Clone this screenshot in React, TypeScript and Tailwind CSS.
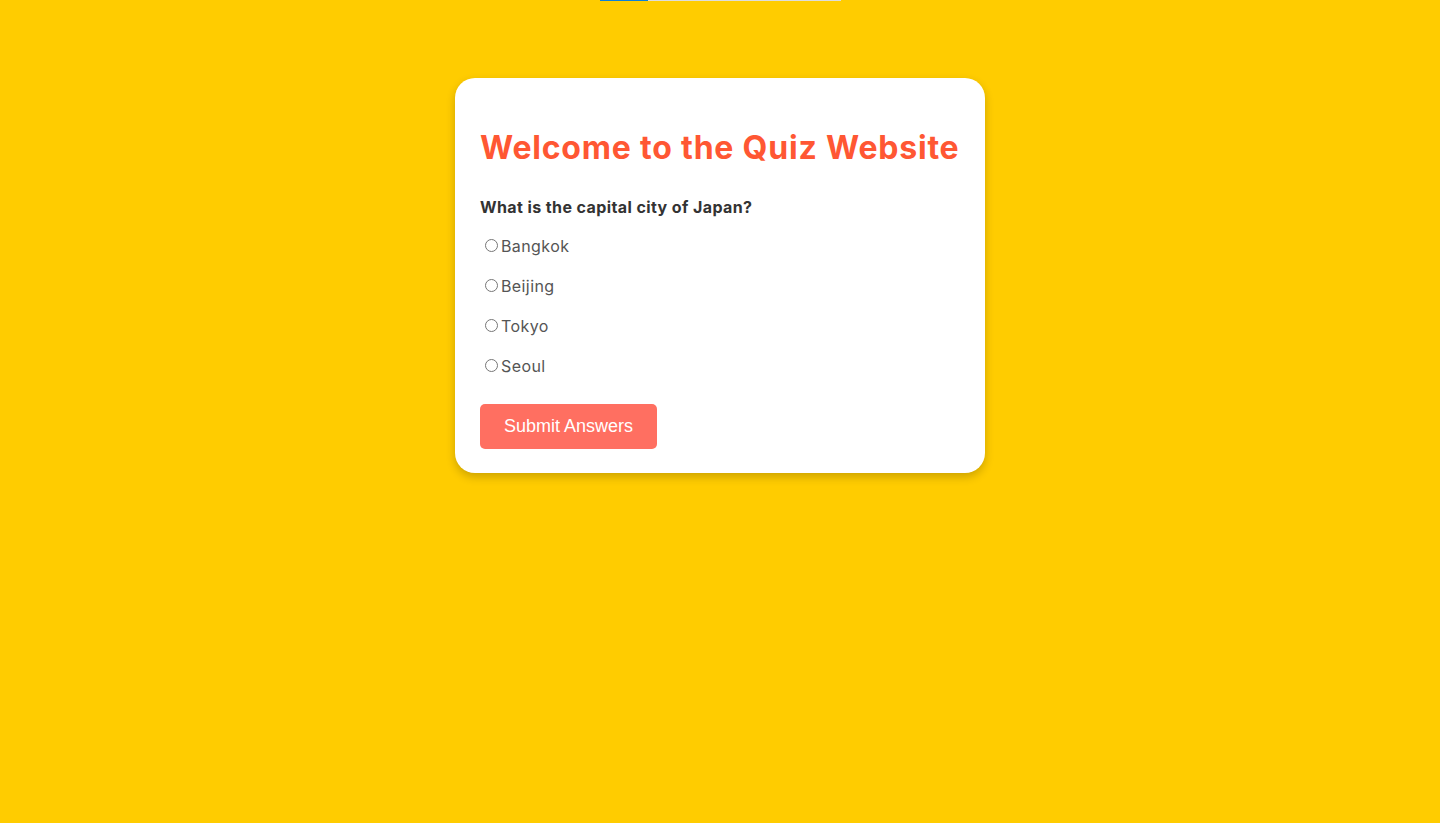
import { useState } from "react";

const options = ["Bangkok", "Beijing", "Tokyo", "Seoul"];

export default function App() {
  const [answer, setAnswer] = useState("");

  return (
    <div className="min-h-screen bg-[#ffcc00] flex flex-col items-center" style={{ fontFamily: "Inter, 'Noto Sans', sans-serif" }}>
      {/* progress strip */}
      <div className="w-[241px] h-px bg-[#dddddd] flex">
        <div className="w-[48px] h-px bg-[#0a7fd8]" />
      </div>

      <div className="mt-[77px] w-[530px] bg-white rounded-[20px] shadow-[0_4px_10px_rgba(0,0,0,0.2)] px-[25px] pt-[47px] pb-[24px]">
        <h1 className="text-[32px] leading-[46px] font-bold text-[#ff5733] tracking-[0.8px]">Welcome to the Quiz Website</h1>

        <div className="mt-[24px]">
          <p className="text-[16px] leading-6 font-bold text-[#333333] tracking-[0.4px]">What is the capital city of Japan?</p>
          <div className="mt-[7px] flex flex-col">
            {options.map((o) => (
              <label key={o} className="h-10 flex items-center text-[16px] text-[#555555] tracking-[0.4px] cursor-pointer">
                <input
                  type="radio"
                  name="q1"
                  value={o}
                  checked={answer === o}
                  onChange={() => setAnswer(o)}
                  className="ml-[5px] mr-[3px] mb-[2px] w-[13px] h-[13px]"
                />
                {o}
              </label>
            ))}
          </div>
        </div>

        <button
          className="mt-[18px] w-[177px] h-[45px] rounded-[5px] bg-[#ff6f61] text-white text-[18px]"
          style={{ fontFamily: "'Liberation Sans', Arial, sans-serif" }}
        >
          Submit Answers
        </button>
      </div>
    </div>
  );
}
